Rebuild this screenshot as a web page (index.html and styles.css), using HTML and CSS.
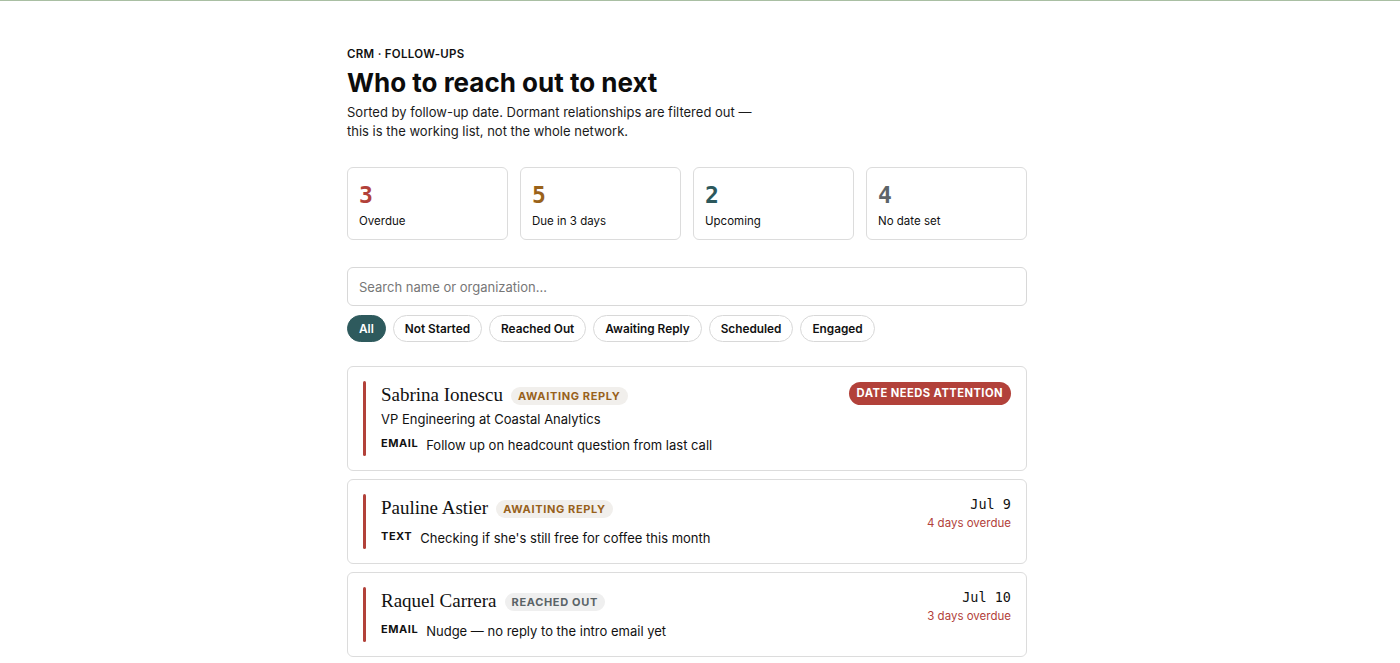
FILE: index.html
```html
<!DOCTYPE html>
<html lang="en">
<head>
<meta charset="utf-8">
<title>CRM · Follow-ups</title>
<link rel="stylesheet" href="styles.css">
</head>
<body>
<div class="topline"></div>
<main class="page">
  <header class="head">
    <div class="eyebrow">CRM · FOLLOW-UPS</div>
    <h1 class="title">Who to reach out to next</h1>
    <p class="sub">Sorted by follow-up date. Dormant relationships are filtered out — this is the working list, not the whole network.</p>
  </header>

  <section class="stats">
    <div class="stat"><div class="num red">3</div><div class="lbl">Overdue</div></div>
    <div class="stat"><div class="num amber">5</div><div class="lbl">Due in 3 days</div></div>
    <div class="stat"><div class="num teal">2</div><div class="lbl">Upcoming</div></div>
    <div class="stat"><div class="num gray">4</div><div class="lbl">No date set</div></div>
  </section>

  <input class="search" type="text" placeholder="Search name or organization...">

  <div class="chips">
    <button class="chip active">All</button>
    <button class="chip">Not Started</button>
    <button class="chip">Reached Out</button>
    <button class="chip">Awaiting Reply</button>
    <button class="chip">Scheduled</button>
    <button class="chip">Engaged</button>
  </div>

  <section class="list">
    <article class="card">
      <div class="bar"></div>
      <div class="body">
        <div class="namerow"><span class="name">Sabrina Ionescu</span><span class="badge awaiting">AWAITING REPLY</span></div>
        <div class="role">VP Engineering at Coastal Analytics</div>
        <div class="action"><span class="chan">EMAIL</span><span>Follow up on headcount question from last call</span></div>
      </div>
      <div class="side"><span class="alert">DATE NEEDS ATTENTION</span></div>
    </article>

    <article class="card">
      <div class="bar"></div>
      <div class="body">
        <div class="namerow"><span class="name">Pauline Astier</span><span class="badge awaiting">AWAITING REPLY</span></div>
        <div class="action"><span class="chan">TEXT</span><span>Checking if she's still free for coffee this month</span></div>
      </div>
      <div class="side"><div class="date">Jul 9</div><div class="over">4 days overdue</div></div>
    </article>

    <article class="card">
      <div class="bar"></div>
      <div class="body">
        <div class="namerow"><span class="name">Raquel Carrera</span><span class="badge reached">REACHED OUT</span></div>
        <div class="action"><span class="chan">EMAIL</span><span>Nudge — no reply to the intro email yet</span></div>
      </div>
      <div class="side"><div class="date">Jul 10</div><div class="over">3 days overdue</div></div>
    </article>
  </section>
</main>
</body>
</html>
```

FILE: styles.css
```css
* { box-sizing: border-box; }
html, body { margin: 0; padding: 0; background: #fff; }
body {
  font-family: Inter, "Liberation Sans", sans-serif;
  color: #111;
  overflow: hidden;
}
.topline { height: 1px; background: #a9bfa3; }
.page {
  width: 680px;
  margin-left: calc(50% - 353px);
  padding-top: 45px;
}
.eyebrow {
  font-size: 11.5px;
  font-weight: 600;
  letter-spacing: 0.025em;
  line-height: 16px;
  color: #111;
}
.title {
  margin: 4px 0 0;
  font-size: 26px;
  font-weight: 700;
  line-height: 34px;
  letter-spacing: 0;
  color: #0c0c0c;
}
.sub {
  margin: 3px 0 0;
  max-width: 410px;
  font-size: 13px;
  line-height: 19px;
  color: #1a1a1a;
}
.stats {
  display: grid;
  grid-template-columns: repeat(4, 1fr);
  gap: 12px;
  margin-top: 26px;
}
.stat {
  height: 73px;
  border: 1px solid #dcdcdc;
  border-radius: 6px;
  padding: 12px 11px 0;
}
.num {
  font-family: "DejaVu Sans Mono", monospace;
  font-weight: 700;
  font-size: 23px;
  line-height: 30px;
}
.red { color: #b2413a; }
.amber { color: #9a621a; }
.teal { color: #2c585c; }
.gray { color: #5d6468; }
.lbl { margin-top: 2px; font-size: 11.5px; line-height: 18px; color: #111; }
.search {
  display: block;
  width: 100%;
  height: 39px;
  margin-top: 27px;
  border: 1px solid #d8d8d8;
  border-radius: 6px;
  padding: 0 11px;
  font-family: Inter, "Liberation Sans", sans-serif;
  font-size: 13px;
  color: #111;
  outline: none;
}
.search::placeholder { color: #777; }
.chips { display: flex; gap: 7px; margin-top: 9px; }
.chip {
  height: 27px;
  border: 1px solid #d8d8d8;
  border-radius: 14px;
  background: #fff;
  padding: 0 11px;
  font-family: Inter, "Liberation Sans", sans-serif;
  font-size: 11.8px;
  font-weight: 600;
  color: #111;
}
.chip.active { background: #2e5a5d; border-color: #2e5a5d; color: #fff; }
.list { display: flex; flex-direction: column; gap: 8px; margin-top: 24px; }
.card {
  display: flex;
  border: 1px solid #dcdcdc;
  border-radius: 6px;
  padding: 14px 15px 14px 15px;
}
.bar { width: 3px; border-radius: 2px; background: #b2413a; flex: none; }
.body { flex: 1; padding-left: 15px; }
.namerow { display: flex; align-items: center; gap: 8px; height: 28px; }
.name {
  font-family: "Liberation Serif", Georgia, serif;
  font-size: 19px;
  color: #111;
}
.badge {
  font-size: 11px;
  font-weight: 700;
  letter-spacing: 0.06em;
  line-height: 18px;
  padding: 0 7px;
  border-radius: 9px;
  margin-top: 2px;
}
.awaiting { background: #f1efec; color: #98611b; }
.reached { background: #efefef; color: #5a6367; }
.role { font-size: 13px; line-height: 20px; color: #111; }
.action { display: flex; align-items: baseline; gap: 8px; margin-top: 6px; font-size: 13px; line-height: 20px; color: #111; }
.chan { font-size: 11px; font-weight: 700; letter-spacing: 0.05em; position: relative; top: -3px; }
.side { text-align: right; }
.alert {
  display: inline-block;
  background: #b2413a;
  color: #fff;
  font-size: 11.2px;
  font-weight: 700;
  letter-spacing: 0.04em;
  line-height: 23px;
  padding: 0 8px;
  border-radius: 12px;
}
.date { font-family: "DejaVu Sans Mono", monospace; font-size: 13.5px; line-height: 20px; color: #111; }
.over { font-size: 11.5px; line-height: 18px; color: #b2413a; }
```
